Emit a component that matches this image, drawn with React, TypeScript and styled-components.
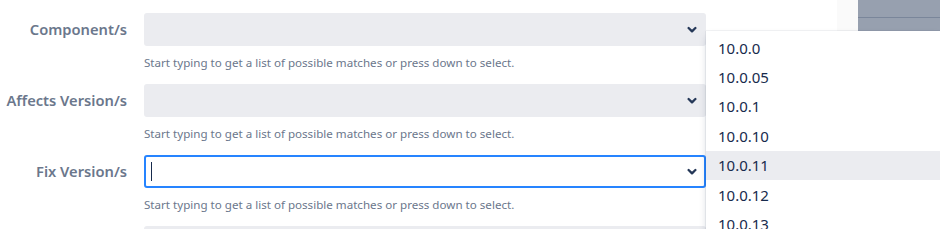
import React from "react";
import styled, { createGlobalStyle } from "styled-components";

const GlobalStyle = createGlobalStyle`
  html, body { margin: 0; padding: 0; background: #ffffff; }
  body { font-family: "Segoe UI", "Noto Sans", "Open Sans", sans-serif; }
  * { box-sizing: border-box; }
`;

const Page = styled.div`
  position: relative;
  display: flex;
  width: 940px;
  height: 229px;
  overflow: hidden;
  background: #ffffff;
`;

const Form = styled.div`
  width: 837px;
  padding-top: 13px;
  display: flex;
  flex-direction: column;
`;

const Row = styled.div`
  display: grid;
  grid-template-columns: 127px 562px;
  column-gap: 17px;
  height: 71px;
  flex-shrink: 0;
`;

const Label = styled.label`
  text-align: right;
  line-height: 33px;
  font-size: 14.7px;
  font-weight: 600;
  color: #6b778c;
  white-space: nowrap;
`;

const FieldCol = styled.div`
  display: flex;
  flex-direction: column;
`;

const Select = styled.div<{ $focused?: boolean }>`
  height: 33px;
  border-radius: 3px;
  border: 2px solid ${(p) => (p.$focused ? "#2684ff" : "#ebecf0")};
  background: ${(p) => (p.$focused ? "#ffffff" : "#ebecf0")};
  display: flex;
  align-items: center;
  justify-content: space-between;
  padding: 0 7px 0 5px;
`;

const Caret = styled.span`
  width: 1px;
  height: 19px;
  background: #172b4d;
`;

const Spacer = styled.span``;

const Help = styled.div`
  margin-top: 10px;
  font-size: 11.6px;
  line-height: 14px;
  color: #6b778c;
  white-space: nowrap;
`;

const Strip = styled.div`
  width: 21px;
  background: #fafafa;
`;

const Panel = styled.div`
  flex: 1;
  background: #97a0af;
`;

const PanelHeader = styled.div`
  height: 18px;
  border-bottom: 1px solid #7a869a;
`;

const Menu = styled.ul`
  position: absolute;
  left: 706px;
  top: 31px;
  right: 0;
  bottom: -20px;
  margin: 0;
  padding: 2px 0 0;
  list-style: none;
  background: #ffffff;
  box-shadow: 0 4px 8px -2px rgba(9, 30, 66, 0.25), 0 0 1px rgba(9, 30, 66, 0.31);
`;

const Option = styled.li<{ $active?: boolean }>`
  height: 29.4px;
  display: flex;
  align-items: center;
  padding-left: 12px;
  font-size: 15px;
  color: #172b4d;
  background: ${(p) => (p.$active ? "#ebecf0" : "transparent")};
`;

const Chevron = () => (
  <svg width="10" height="8" viewBox="0 0 10 8" aria-hidden="true">
    <polyline
      points="1.6,2 5,5.4 8.4,2"
      fill="none"
      stroke="#253858"
      strokeWidth="2.3"
      strokeLinecap="round"
      strokeLinejoin="round"
    />
  </svg>
);

const HELP = "Start typing to get a list of possible matches or press down to select.";

const fields = [
  { label: "Component/s", focused: false },
  { label: "Affects Version/s", focused: false },
  { label: "Fix Version/s", focused: true },
];

const versions = ["10.0.0", "10.0.05", "10.0.1", "10.0.10", "10.0.11", "10.0.12", "10.0.13"];

export default function App() {
  return (
    <>
      <GlobalStyle />
      <Page>
        <Form>
          {fields.map((f) => (
            <Row key={f.label}>
              <Label>{f.label}</Label>
              <FieldCol>
                <Select $focused={f.focused}>
                  {f.focused ? <Caret /> : <Spacer />}
                  <Chevron />
                </Select>
                <Help>{HELP}</Help>
              </FieldCol>
            </Row>
          ))}
          <Row>
            <Spacer />
            <FieldCol>
              <Select />
            </FieldCol>
          </Row>
        </Form>
        <Strip />
        <Panel>
          <PanelHeader />
        </Panel>
        <Menu>
          {versions.map((v) => (
            <Option key={v} $active={v === "10.0.11"}>
              {v}
            </Option>
          ))}
        </Menu>
      </Page>
    </>
  );
}
